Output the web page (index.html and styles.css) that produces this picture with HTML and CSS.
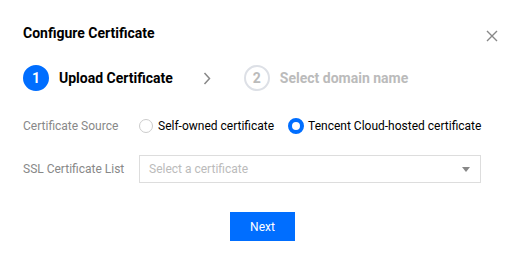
FILE: index.html
```html
<!DOCTYPE html>
<html lang="en">
<head>
    <meta charset="UTF-8">
    <title>Configure Certificate</title>
    <link rel="stylesheet" href="styles.css">
</head>
<body>
    <div class="dialog">
        <div class="dialog-header">
            <h1>Configure Certificate</h1>
            <span class="close">
                <svg width="12" height="12" viewBox="0 0 12 12"><path d="M1 1L11 11M11 1L1 11" stroke="#888" stroke-width="1.4"/></svg>
            </span>
        </div>

        <div class="steps">
            <div class="step active">
                <span class="step-num">1</span>
                <span class="step-name">Upload Certificate</span>
            </div>
            <span class="step-arrow">
                <svg width="8" height="13" viewBox="0 0 8 13"><path d="M1.5 1L6.5 6.5L1.5 12" fill="none" stroke="#888" stroke-width="1.5"/></svg>
            </span>
            <div class="step">
                <span class="step-num">2</span>
                <span class="step-name">Select domain name</span>
            </div>
        </div>

        <div class="form">
            <div class="form-row">
                <label class="form-label">Certificate Source</label>
                <div class="radios">
                    <label class="radio"><span class="radio-dot"></span>Self-owned certificate</label>
                    <label class="radio checked"><span class="radio-dot"></span>Tencent Cloud-hosted certificate</label>
                </div>
            </div>
            <div class="form-row">
                <label class="form-label">SSL Certificate List</label>
                <div class="select">
                    <span class="placeholder">Select a certificate</span>
                    <span class="caret"></span>
                </div>
            </div>
        </div>

        <div class="footer">
            <button class="btn-primary">Next</button>
        </div>
    </div>
</body>
</html>
```

FILE: styles.css
```css
body {
    margin: 0;
    background: #fff;
    font-family: Roboto, "Noto Sans", sans-serif;
    color: #000;
}
.dialog {
    width: 520px;
    height: 263px;
    padding: 0 23px;
    box-sizing: border-box;
}
.dialog-header {
    display: flex;
    justify-content: space-between;
    align-items: center;
    padding-top: 24px;
    height: 18px;
}
.dialog-header h1 {
    margin: 0;
    font-size: 14px;
    font-weight: bold;
    line-height: 18px;
}
.close {
    display: flex;
    margin-right: -1px;
    margin-top: 5px;
}
.steps {
    display: flex;
    align-items: center;
    margin-top: 23px;
    height: 26px;
}
.step {
    display: flex;
    align-items: center;
    gap: 10px;
}
.step-num {
    width: 26px;
    height: 26px;
    box-sizing: border-box;
    border-radius: 50%;
    border: 2px solid #dde0e6;
    color: #bbb;
    display: flex;
    align-items: center;
    justify-content: center;
    font-size: 14px;
    font-weight: bold;
}
.step-name {
    font-size: 14px;
    font-weight: bold;
    color: #bbb;
}
.step.active .step-num {
    background: #006eff;
    border-color: #006eff;
    color: #fff;
}
.step.active .step-name {
    color: #000;
}
.step-arrow {
    display: flex;
    margin: 0 33px 0 30px;
}
.form {
    margin-top: 21px;
}
.form-row {
    display: flex;
    align-items: center;
    height: 28px;
    margin-bottom: 15px;
}
.form-label {
    width: 116px;
    font-size: 12px;
    color: #888;
}
.radios {
    display: flex;
    gap: 15px;
    white-space: nowrap;
}
.radio {
    display: flex;
    align-items: center;
    gap: 5px;
    font-size: 12px;
    color: #000;
}
.radio-dot {
    width: 14px;
    height: 14px;
    box-sizing: border-box;
    border-radius: 50%;
    border: 1px solid #ccc;
}
.radio.checked .radio-dot {
    width: 16px;
    height: 16px;
    margin: 0 -1px;
    border: 4px solid #006eff;
}
.select {
    width: 342px;
    height: 28px;
    box-sizing: border-box;
    border: 1px solid #ddd;
    display: flex;
    align-items: center;
    justify-content: space-between;
    padding: 0 10px 0 9px;
}
.placeholder {
    font-size: 12px;
    color: #bbb;
}
.caret {
    width: 0;
    height: 0;
    border-left: 4px solid transparent;
    border-right: 4px solid transparent;
    border-top: 5px solid #888;
}
.footer {
    display: flex;
    justify-content: center;
    margin-top: 29px;
    padding-left: 5px;
}
.btn-primary {
    width: 65px;
    height: 29px;
    border: none;
    background: #006eff;
    color: #fff;
    font-family: inherit;
    font-size: 12px;
    cursor: pointer;
}
```
